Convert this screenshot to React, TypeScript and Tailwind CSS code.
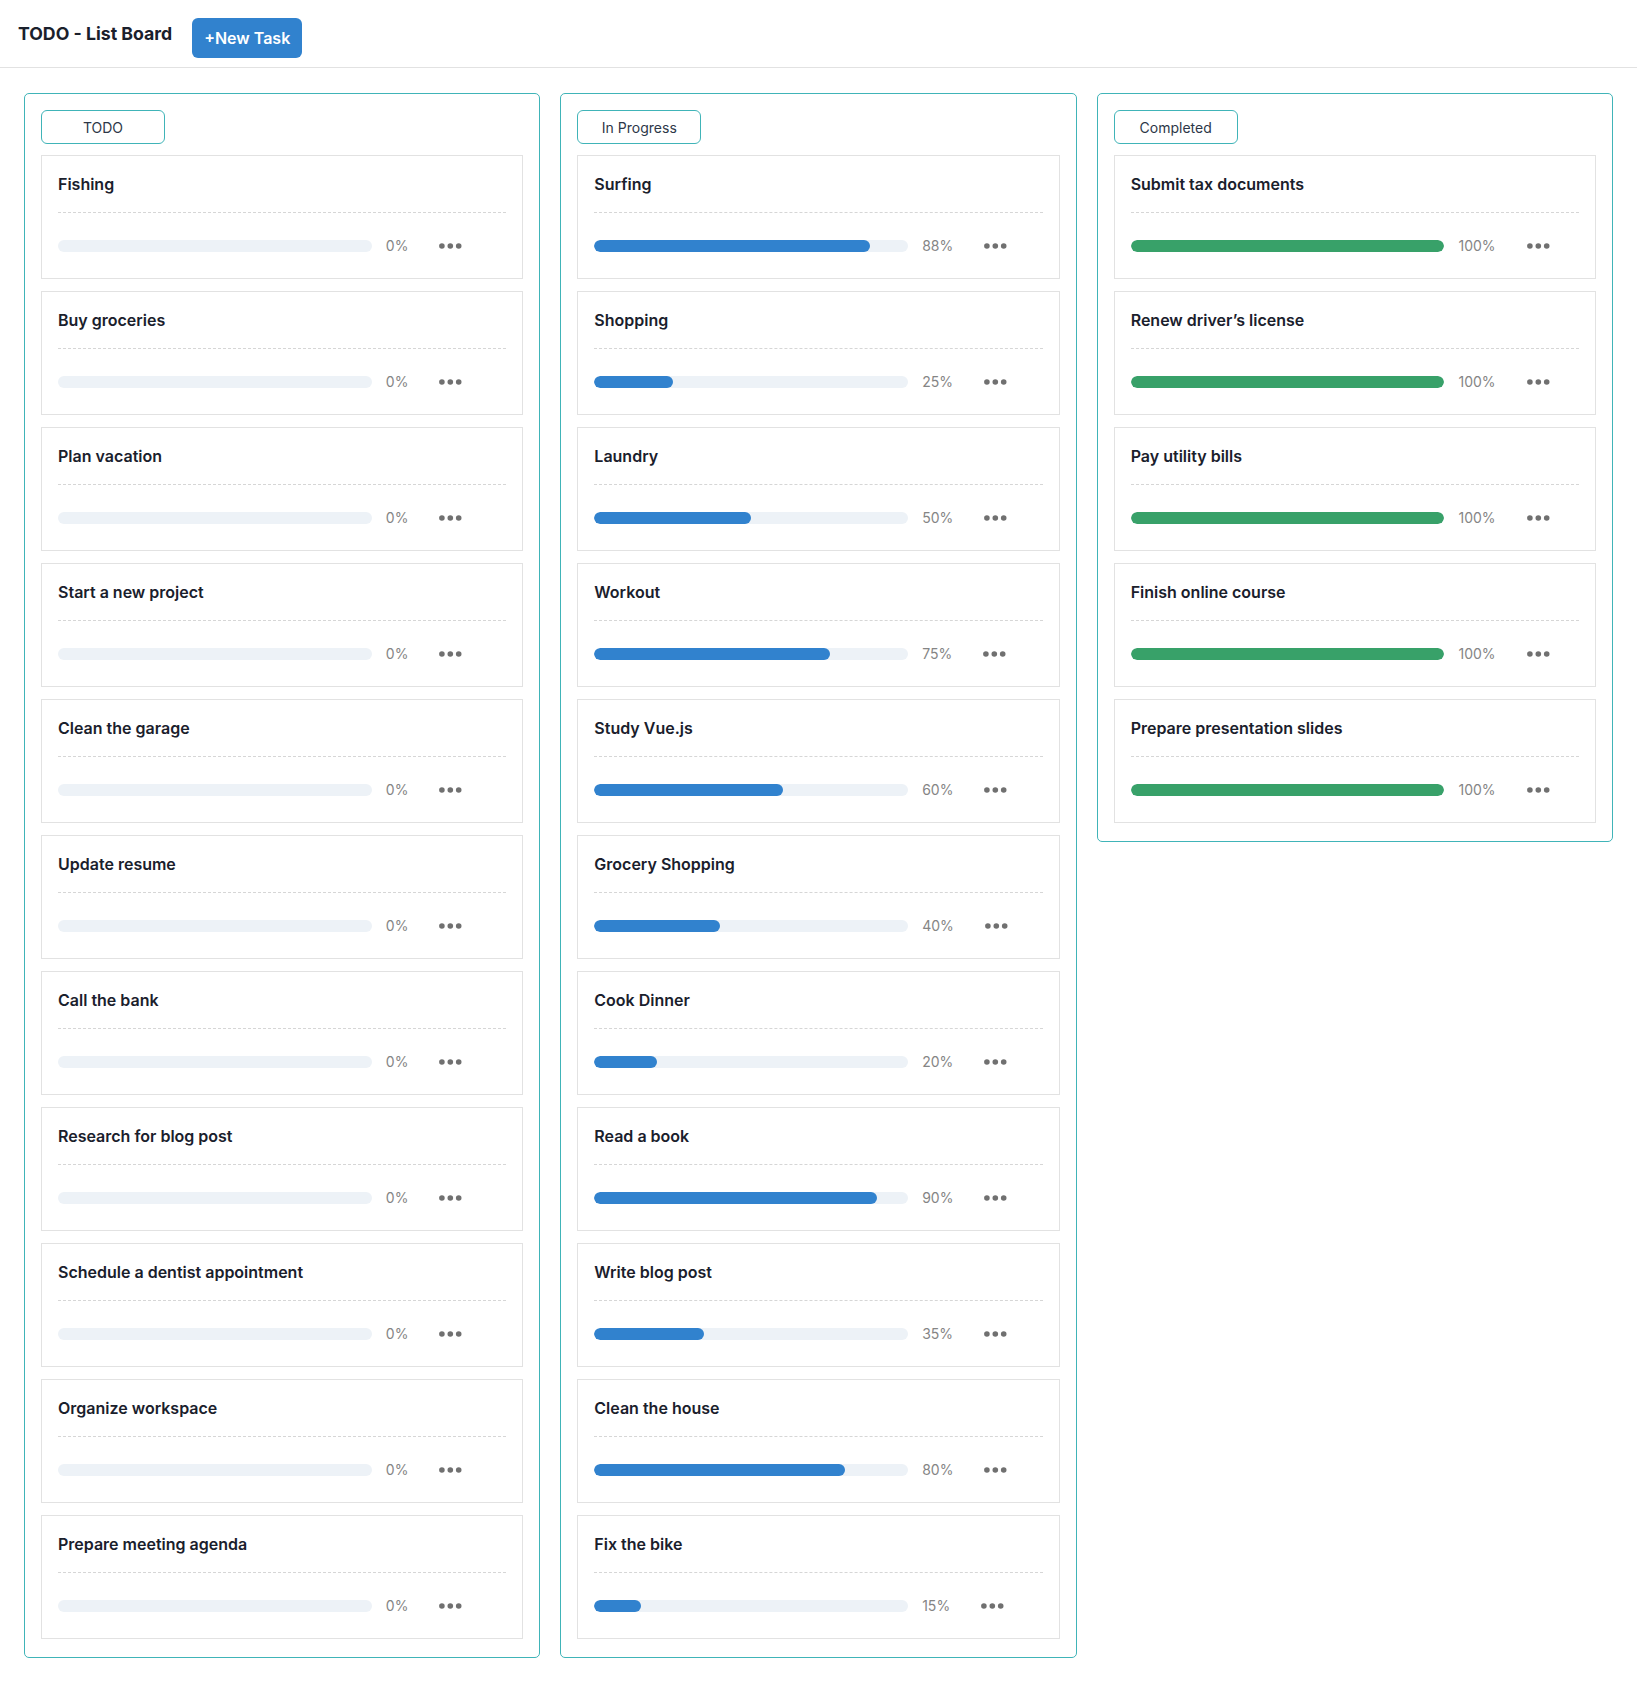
import React from "react";

type Task = { title: string; progress: number };

const todo: Task[] = [
  "Fishing",
  "Buy groceries",
  "Plan vacation",
  "Start a new project",
  "Clean the garage",
  "Update resume",
  "Call the bank",
  "Research for blog post",
  "Schedule a dentist appointment",
  "Organize workspace",
  "Prepare meeting agenda",
].map((t) => ({ title: t, progress: 0 }));

const inProgress: Task[] = [
  { title: "Surfing", progress: 88 },
  { title: "Shopping", progress: 25 },
  { title: "Laundry", progress: 50 },
  { title: "Workout", progress: 75 },
  { title: "Study Vue.js", progress: 60 },
  { title: "Grocery Shopping", progress: 40 },
  { title: "Cook Dinner", progress: 20 },
  { title: "Read a book", progress: 90 },
  { title: "Write blog post", progress: 35 },
  { title: "Clean the house", progress: 80 },
  { title: "Fix the bike", progress: 15 },
];

const completed: Task[] = [
  "Submit tax documents",
  "Renew driver\u2019s license",
  "Pay utility bills",
  "Finish online course",
  "Prepare presentation slides",
].map((t) => ({ title: t, progress: 100 }));

function Dots() {
  return (
    <svg width="23" height="6" viewBox="0 0 23 6" className="block">
      <circle cx="2.9" cy="3" r="2.8" fill="#707070" />
      <circle cx="11.3" cy="3" r="2.8" fill="#707070" />
      <circle cx="19.7" cy="3" r="2.8" fill="#707070" />
    </svg>
  );
}

function Card({ task, color }: { task: Task; color: string }) {
  return (
    <div className="border border-[#e2e2e2] bg-white p-4">
      <div className="border-b border-dashed border-[#d6d6d6] pb-4 text-[16px] leading-6 font-semibold text-[#1a202c]">
        {task.title}
      </div>
      <div className="mt-4 flex h-[33px] items-center">
        <div className="relative h-3 w-[70%] overflow-hidden rounded-full bg-[#edf2f7]">
          <div
            className={`h-full rounded-full ${color}`}
            style={{ width: `${task.progress}%` }}
          />
        </div>
        <span className="ml-[14px] text-[14px] leading-5 text-[#858585]">
          {task.progress}%
        </span>
        <div className="ml-[31px]">
          <Dots />
        </div>
      </div>
    </div>
  );
}

function Column({
  label,
  tasks,
  color,
}: {
  label: string;
  tasks: Task[];
  color: string;
}) {
  return (
    <div className="rounded-[5px] border border-[#40b4b8] px-4 pt-4 pb-[18px]">
      <div className="mb-[11px] flex h-[34px] w-[124px] items-center justify-center rounded-md border border-[#40b4b8] text-[14px] text-[#2d3748]">
        {label}
      </div>
      <div className="flex flex-col gap-3">
        {tasks.map((t) => (
          <Card key={t.title} task={t} color={color} />
        ))}
      </div>
    </div>
  );
}

export default function App() {
  return (
    <div
      className="min-h-screen bg-white"
      style={{ fontFamily: "Inter, 'Noto Sans', sans-serif" }}
    >
      <header className="flex h-[68px] items-start border-b border-[#e2e2e2] px-[18px] pt-[18px]">
        <h1 className="mt-[2px] text-[17.7px] leading-7 font-bold text-[#1a202c]">
          TODO - List Board
        </h1>
        <button className="ml-5 flex h-10 w-[110px] items-center justify-center rounded-md bg-[#3182ce] text-[16px] font-semibold text-white">
          +New Task
        </button>
      </header>
      <main className="grid grid-cols-3 items-start gap-5 px-6 pt-[25px] pb-6">
        <Column label="TODO" tasks={todo} color="bg-[#3182ce]" />
        <Column label="In Progress" tasks={inProgress} color="bg-[#3182ce]" />
        <Column label="Completed" tasks={completed} color="bg-[#38a169]" />
      </main>
    </div>
  );
}
